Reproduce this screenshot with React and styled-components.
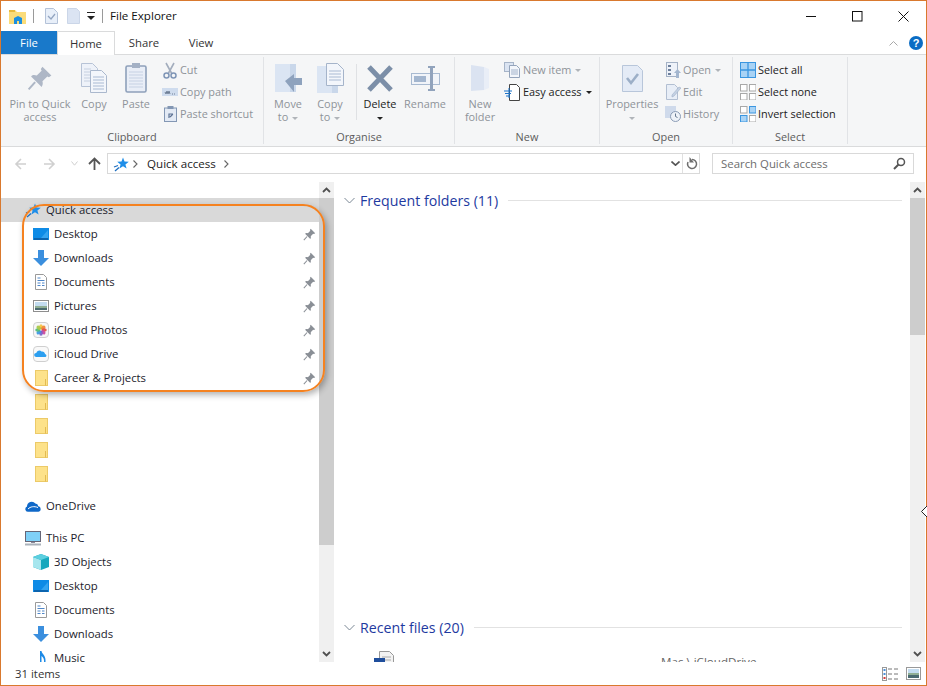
import React from "react";
import styled, { createGlobalStyle } from "styled-components";

const Global = createGlobalStyle`
  html, body { margin: 0; padding: 0; overflow: hidden; background: #fff; }
  * { box-sizing: border-box; }
`;

const Window = styled.div`
  position: relative; width: 927px; height: 686px; display: flex; flex-direction: column;
  background: #fff; border: 1px solid #d9792e;
  font-family: "Open Sans", "Noto Sans", sans-serif; font-size: 10.9px; color: #222;
`;
const TitleBar = styled.div`display: flex; align-items: center; height: 30px; padding-left: 8px; flex: none;`;
const QuickTool = styled.span`display: flex; width: ${p => p.$w}px; margin-right: ${p => p.$mr || 0}px; justify-content: center;`;
const TitleSep = styled.span`width: 1px; height: 14px; background: #9a9a9a; margin: 0 ${p => p.$mr}px 0 7px;`;
const TitleText = styled.span`font-size: 11.6px; color: #111; flex: 1; margin-bottom: 2px;`;
const WinButtons = styled.div`display: flex; height: 30px; align-items: center;`;
const WinButton = styled.span`width: 46px; display: flex; justify-content: center;`;

const TabRow = styled.div`display: flex; height: 24px; flex: none; border-bottom: 1px solid #dadbdc; align-items: stretch; font-size: 11.3px;`;
const FileTab = styled.div`width: 56px; background: #1979ca; color: #fff; display: flex; align-items: center; justify-content: center; height: 23px;`;
const Tab = styled.div`
  width: ${p => p.$w}px; height: ${p => (p.$active ? 24 : 23)}px; display: flex; align-items: center; justify-content: center; color: #333;
  background: #fff; ${p => p.$active && "border: 1px solid #dadbdc; border-bottom: none;"}
`;
const TabTools = styled.div`margin-left: auto; display: flex; align-items: center; gap: 11px; padding-right: 3px;`;
const Help = styled.span`width: 14px; height: 14px; border-radius: 50%; background: #0a6cc4; color: #fff; font: bold 11px "Liberation Sans", sans-serif; display: flex; align-items: center; justify-content: center;`;

const Ribbon = styled.div`display: flex; height: 92px; flex: none; background: #f5f6f7; border-bottom: 1px solid #dadbdc;`;
const Group = styled.div`
  width: ${p => p.$w}px; height: 87px; margin-top: 2px; padding-top: 2px; border-right: 1px solid #e1e3e6;
  display: flex; flex-direction: column;
`;
const GroupBody = styled.div`display: flex; flex: none; height: 70px; padding-left: ${p => p.$pad}px;`;
const GroupLabel = styled.div`flex: none; height: 15px; line-height: 16px; text-align: center; color: #5c5c5c;`;
const BigButton = styled.div`
  width: ${p => p.$w}px; display: flex; flex-direction: column; align-items: center; text-align: center;
  color: ${p => (p.$on ? "#222" : "#8e9399")}; line-height: 13px; white-space: nowrap;
`;
const BigIcon = styled.div`height: 38px; display: flex; align-items: center; justify-content: center;`;
const VSep = styled.div`width: 1px; height: 56px; margin: 5px 1px 0 5px; background: #dfe1e4;`;
const SmallCol = styled.div`display: flex; flex-direction: column; margin-left: ${p => p.$ml}px;`;
const SmallItem = styled.div`
  display: flex; align-items: center; height: 22px; gap: ${p => p.$gap}px; white-space: nowrap;
  color: ${p => (p.$on ? "#222" : "#8e9399")};
`;
const SmallIcon = styled.span`width: 18px; display: flex; justify-content: center; align-items: center;`;
const SmallText = styled.span`margin-bottom: 2px;`;
const Caret = styled.span`
  display: inline-block; width: 0; height: 0; vertical-align: middle; margin-left: ${p => (p.$ml === undefined ? 4 : p.$ml)}px;
  border-left: 3px solid transparent; border-right: 3px solid transparent;
  border-top: 3px solid ${p => (p.$on ? "#222" : "#b0b4b9")};
`;

const AddressRow = styled.div`display: flex; height: 35px; flex: none; padding: 6px 0 0 5px;`;
const NavBtn = styled.span`width: ${p => p.$w}px; height: 21px; display: flex; align-items: center; justify-content: center;`;
const AddressBox = styled.div`
  width: 593px; height: 21px; margin-left: 3px; border: 1px solid #d9d9d9; display: flex; align-items: center; padding: 0 1px 0 5px;
`;
const CrumbGap = styled.span`width: 4px;`;
const Crumb = styled.span`font-size: 11.6px; color: #222; margin: 0 8px 0 9px;`;
const Push = styled.span`flex: 1;`;
const BoxSep = styled.span`width: 1px; height: 19px; background: #e0e0e0; margin: 0 3px 0 2px;`;
const SearchBox = styled.div`
  width: 202px; height: 21px; margin-left: 12px; border: 1px solid #d9d9d9; display: flex; align-items: center;
  justify-content: space-between; padding: 0 7px 0 8px; color: #6d6d6d; font-size: 11.4px;
`;

const Body = styled.div`display: flex; flex: 1; min-height: 0; overflow: hidden;`;
const Sidebar = styled.div`width: 318px; flex: none; padding-top: 16px; overflow: hidden;`;
const TreeRow = styled.div`
  display: flex; align-items: center; height: 24px; padding-left: ${p => p.$level * 8 + 24}px; padding-right: 1px; margin-top: ${p => p.$mt || 0}px;
  background: ${p => (p.$sel ? "#d9d9d9" : "transparent")}; font-size: 11.35px; color: #1c1c2c;
`;
const TreeIcon = styled.span`width: 16px; height: 18px; display: flex; align-items: center; justify-content: center; margin-right: 5px; flex: none;`;
const TreeLabel = styled.span`margin-bottom: 2px;`;
const PinSlot = styled.span`margin-left: auto; display: flex; width: 13px; margin-right: 2px;`;

const Scrollbar = styled.div`width: 15px; flex: none; background: #f0f0f0; display: flex; flex-direction: column;`;
const ScrollArrow = styled.span`height: 16px; flex: none; display: flex; align-items: center; justify-content: center;`;
const Thumb = styled.div`height: ${p => p.$h}px; background: #cdcdcd; flex: none;`;
const Track = styled.div`flex: 1;`;
const RightGutter = styled.span`width: 1px; flex: none;`;

const Main = styled.div`flex: 1; min-width: 0; padding: 7px 8px 0 8px; margin-left: 2px; overflow: hidden;`;
const GroupHeader = styled.div`display: flex; align-items: center; height: 22px; gap: 5px;`;
const HeaderTitle = styled.span`font-size: 14.2px; color: #1e3a9f; white-space: nowrap;`;
const HeaderLine = styled.span`flex: 1; height: 1px; background: #e2e2e2; margin-left: 5px;`;
const GroupSpace = styled.div`height: ${p => p.$h}px;`;
const FileRow = styled.div`display: flex; margin-top: 13px; padding-left: 30px; height: 40px;`;
const FilePath = styled.span`margin: 0 0 0 266px; color: #666; font-size: 11.6px; line-height: 14px; padding-top: 4px;`;

const StatusBar = styled.div`display: flex; align-items: center; height: 23px; flex: none; padding: 0 5px 0 14px; color: #333;`;
const StatusText = styled.span`flex: 1; font-size: 11.4px;`;
const StatusViews = styled.div`display: flex; gap: 8px; align-items: center;`;

const Annotation = styled.div`
  position: absolute; left: 21px; top: 203px; width: 303px; height: 188px; border: 2px solid #f58220; border-radius: 22px;
  box-shadow: 2px 3px 6px rgba(0,0,0,.3); pointer-events: none;
`;
const EdgeMark = styled.span`position: absolute; right: -1px; top: 505px; display: flex;`;

const S = ({ w, h, children }) => <svg width={w} height={h} viewBox={`0 0 ${w} ${h}`} style={{ display: "block", flex: "none" }}>{children}</svg>;

const TitleFolder = () => <S w={17} h={15}><path d="M0 1h6l2 2h9v12H0z" fill="#fbdc79" /><path d="M0 1h6v2H0z" fill="#e8b93c" /><path d="M5 15v-6l4-2 4 2v6h-3v-3H8v3z" fill="#1b8fe0" /></S>;
const CheckDoc = () => <S w={13} h={16}><path d="M.5.5h8l4 4v11H.5z" fill="#e8eff9" stroke="#b4c2d8" /><path d="M3 8l3 3 4-5" fill="none" stroke="#93a5c1" strokeWidth="1.3" /></S>;
const BlankDoc = () => <S w={13} h={16}><path d="M.5.5h9l3 3v12H.5z" fill="#dbe4f3" stroke="#cbd6e8" /></S>;
const QuickDrop = () => <S w={8} h={9}><path d="M0 0h8v1H0zM0 4h8L4 8z" fill="#222" /></S>;
const Min = () => <S w={11} h={11}><path d="M0 5.5h10" stroke="#111" /></S>;
const Max = () => <S w={11} h={11}><rect x=".5" y=".5" width="9.5" height="9.5" fill="none" stroke="#111" /></S>;
const Close = () => <S w={11} h={11}><path d="M.5.5l10 10M10.5.5l-10 10" stroke="#111" /></S>;
const ChevUp = () => <S w={9} h={6}><path d="M.5 5.5l4-4 4 4" fill="none" stroke="#a8a8a8" /></S>;

const Pin = ({ s = 32, c = "#aeb7c6" }) => <svg width={s} height={s} viewBox="0 0 32 32" style={{ display: "block" }}><path d="M19 2l11 11-3 2-2-1-6 6c1 3 0 5-1 7L5 14c2-2 4-2 7-1l6-6-1-2z" fill={c} /><path d="M10 21L2 30" stroke={c} strokeWidth="2.5" /></svg>;
const CopyBig = () => <S w={26} h={30}><path d="M.5.5h11l5 5v18H.5z" fill="#eef2f9" stroke="#b7c3d6" /><path d="M3 6h7M3 9h10M3 12h10M3 15h10M3 18h10" stroke="#c6d0e0" /><path d="M9.5 7.5h11l5 5v17h-16z" fill="#f3f6fb" stroke="#aab8cd" /><path d="M12 14h11M12 17h11M12 20h11M12 23h11M12 26h11" stroke="#a9bad3" /></S>;
const PasteBig = () => <S w={22} h={30}><rect x="1" y="3" width="20" height="26" rx="1.5" fill="#e9eef7" stroke="#8ea0ba" strokeWidth="1.6" /><rect x="7" y="0" width="8" height="5" fill="#a4b1c5" /><path d="M4 9h14M4 12h14M4 15h14M4 18h14M4 21h14M4 24h14" stroke="#c6d1e3" /></S>;
const Scissors = () => <S w={14} h={17}><path d="M3 1l6 11M11 1L5 12" stroke="#a3adbd" strokeWidth="1.6" /><circle cx="3.5" cy="13.5" r="2.5" fill="none" stroke="#7f95b6" strokeWidth="1.5" /><circle cx="10.5" cy="13.5" r="2.5" fill="none" stroke="#7f95b6" strokeWidth="1.5" /></S>;
const CopyPath = () => <S w={16} h={8}><rect width="16" height="8" fill="#cfdcee" /><path d="M3 4l1 2 1-3 1 3 1-3 1 3M10 6h1M12 6h1" stroke="#6f7f96" fill="none" /></S>;
const PasteShort = () => <S w={13} h={16}><rect x=".5" y="2" width="12" height="13.5" fill="#e3eaf5" stroke="#8397b4" /><rect x="3.5" y="0" width="6" height="3" fill="#8397b4" /><path d="M5 12V8h4M9 8l-3 3" stroke="#5d7395" fill="none" strokeWidth="1.2" /></S>;
const MoveBig = () => <S w={27} h={29}><rect x="0" y="0" width="21" height="28" fill="#dbe5f3" /><rect x="15" y="0" width="6" height="28" fill="#c9d7ea" /><path d="M10 17l9-7v4h8v7h-8v7z" fill="#8ea2bd" /></S>;
const CopyToBig = () => <S w={27} h={30}><rect x="0" y="3" width="21" height="27" fill="#dbe5f3" /><rect x="15" y="3" width="6" height="27" fill="#c9d7ea" /><path d="M9.5.5h11l6 6v16h-17z" fill="#f3f6fb" stroke="#a5b4ca" /><path d="M12 8h12M12 11h12M12 14h12M12 17h12" stroke="#a9bad3" /></S>;
const DeleteBig = () => <S w={26} h={27}><path d="M2 2l22 23M24 2L2 25" stroke="#7c8fa8" strokeWidth="5" /></S>;
const RenameBig = () => <S w={29} h={27}><rect x=".5" y="8.5" width="28" height="11" fill="#f1f4f9" stroke="#a8bad1" /><rect x="3" y="11" width="12" height="6" fill="#a3b6cf" /><path d="M17 1h7v2h-2v21h2v2h-7v-2h2V3h-2z" fill="#91a3bc" /></S>;
const NewFolderBig = () => <S w={20} h={28}><path d="M1 1l13 2v23L1 27z" fill="#dbe3f1" /><path d="M14 3l5 2v19l-5 2z" fill="#e9eef7" /></S>;
const NewItem = () => <S w={17} h={16}><rect x=".5" y=".5" width="9" height="9" fill="#dbe4f2" stroke="#a6b4c8" /><path d="M5.5 3.5h7l3 3v9h-10z" fill="#f3f6fb" stroke="#94a4bb" /><path d="M7 8h7M7 10h7M7 12h7" stroke="#a2b3cb" /></S>;
const EasyAccess = () => <S w={16} h={17}><path d="M5.5.5h7l3 3v13h-10z" fill="#fff" stroke="#444" /><path d="M0 7h8M1 9.5h6M2 12h4M5 4v10" stroke="#1b72c8" fill="none" /></S>;
const PropsBig = () => <S w={21} h={27}><path d="M.5.5h15l5 5v21H.5z" fill="#e4ebf6" stroke="#b8c6da" /><path d="M5 13l4 5 7-9" fill="none" stroke="#9cafc7" strokeWidth="2.6" /></S>;
const OpenSmall = () => <S w={15} h={16}><rect x=".5" y=".5" width="11" height="14" fill="#eef2f9" stroke="#a4b2c6" /><path d="M2 3h3v2H2zM2 7h3v2H2zM2 11h3v2H2z" fill="#6c7f9b" /><path d="M10 16V11H8l3.5-4 3.5 4h-2v5z" fill="#a3b6cf" /></S>;
const EditSmall = () => <S w={15} h={16}><path d="M.5.5h8l3 3v12H.5z" fill="#e8eef7" stroke="#b2bfd2" /><path d="M6 11l7-8 2 1-7 8-2 1z" fill="#c5d2e4" stroke="#9fb0c7" strokeWidth=".6" /></S>;
const HistorySmall = () => <S w={16} h={16}><rect x="0" y="0" width="11" height="12" fill="#cfdaeb" /><circle cx="10.5" cy="10.5" r="5" fill="#eef2f8" stroke="#8b9cb5" /><path d="M10.5 7.5v3l2 1" stroke="#66788f" fill="none" /></S>;
const Grid4 = ({ fills, strokes }) => (
  <S w={16} h={16}>{[[0, 0], [9, 0], [0, 9], [9, 9]].map(([x, y], i) => <rect key={i} x={x + .5} y={y + .5} width="6.5" height="6.5" fill={fills[i]} stroke={strokes[i]} />)}</S>
);
const SelectAll = () => <S w={16} h={16}><rect x=".5" y=".5" width="15" height="15" fill="#a9d3f5" stroke="#3b96e0" /><path d="M8 0v16M0 8h16" stroke="#3b96e0" strokeWidth="1.3" /></S>;

const DesktopI = () => <S w={16} h={12}><rect width="16" height="12" fill="#0e8be6" /><path d="M8 10l7-8v8z" fill="#35a4f0" /><rect x="1" y="10.5" width="14" height="1" fill="#0b3f77" /></S>;
const DownI = () => <S w={16} h={16}><path d="M5 0h6v8h5l-8 8-8-8h5z" fill="#3b8fde" /></S>;
const DocI = () => <S w={12} h={16}><path d="M.5.5h8l3 3v12H.5z" fill="#fff" stroke="#9a9a9a" /><path d="M2.5 4h3M2.5 6.5h7M2.5 9h3M7 9h2.5M2.5 11.5h3M7 11.5h2.5" stroke="#4f86c8" /></S>;
const PicI = () => <S w={16} h={12}><rect x=".5" y=".5" width="15" height="11" fill="#fff" stroke="#8e8e8e" /><rect x="2" y="2" width="12" height="4" fill="#c3dcf0" /><rect x="2" y="6" width="12" height="2" fill="#8fae94" /><rect x="2" y="8" width="12" height="2" fill="#4a6a70" /></S>;
const PhotosI = () => {
  const cols = ["#f6c344", "#ee8a35", "#e4504a", "#c74aa2", "#7a62c9", "#3f9be0", "#55bb7b", "#a9c94a"];
  return <S w={16} h={16}><rect x=".5" y=".5" width="15" height="15" rx="3.5" fill="#f7f7f7" stroke="#cfcfcf" />{cols.map((c, i) => <ellipse key={i} cx="8" cy="4.8" rx="1.8" ry="2.6" fill={c} opacity=".95" transform={`rotate(${i * 45} 8 8)`} />)}</S>;
};
const DriveI = () => <S w={16} h={16}><rect x=".5" y=".5" width="15" height="15" rx="3.5" fill="#f9f9f9" stroke="#cfcfcf" /><path d="M3 11a2 2 0 0 1 .3-4 3 3 0 0 1 5.2-1.4A2.6 2.6 0 0 1 12 8a1.600 1.600 0 0 1 .6 3z" fill="#2c9ff0" /></S>;
const FolderI = () => <S w={13} h={16}><rect x=".5" y=".5" width="12" height="15" fill="#fde28a" stroke="#ecca68" /><path d="M10.5 9v6.500" stroke="#e3bb52" /></S>;
const OneDriveI = () => <S w={16} h={11}><path d="M2.8 10.8A2.700 2.700 0 0 1 2 5.600 4.700 4.700 0 0 1 10.400 2.600 3.200 3.200 0 0 1 13.300 5.300 2.800 2.800 0 0 1 13.500 10.800z" fill="#0f68c8" /><path d="M3 8c2.500-2.500 6-3 10-1.500" fill="none" stroke="#fff" /></S>;
const StarI = () => <S w={16} h={16}><path d="M10 1.500l1.500 4 4.300.2-3.400 2.700 1.200 4.200L10 10.200l-3.600 2.400 1.200-4.200L4.200 5.700l4.300-.2z" fill="#1f8ee8" /><path d="M5 9.500L1 11M6 11.500L2 15" stroke="#1f6fc0" strokeWidth="1.300" /></S>;
const PcI = () => <S w={16} h={15}><rect x=".5" y=".5" width="15" height="10" fill="#7fd0f7" stroke="#667" /><path d="M0 13.500h16" stroke="#aab2bb" strokeWidth="2" /><path d="M6 11.500h4" stroke="#889" /></S>;
const CubeI = () => <S w={16} h={16}><path d="M8 0l8 3v10l-8 3-8-3V3z" fill="#18a8bd" /><path d="M0 3l8 3v10l-8-3z" fill="#a6e6ee" /><path d="M8 0l8 3-8 3-8-3z" fill="#5ccfdf" /></S>;
const NoteI = () => <S w={12} h={16}><path d="M5 1h1.500c.3 3 4 4 4 9v5H9v-4.500C9 8 7.500 7 6.500 6v9H2v-3h3z" fill="#1d8ae6" /></S>;
const PinSmall = () => <Pin s={13} c="#8a8f96" />;

const ArrowL = ({ c = "#d0d0d0" }) => <S w={13} h={12}><path d="M7 1L2 6l5 5M2 6h10" fill="none" stroke={c} strokeWidth="1.6" /></S>;
const ArrowR = ({ c = "#d0d0d0" }) => <S w={13} h={12}><path d="M6 1l5 5-5 5M11 6H1" fill="none" stroke={c} strokeWidth="1.6" /></S>;
const ArrowU = () => <S w={13} h={13}><path d="M1 7l5.500-5.500L12 7M6.500 2v11" fill="none" stroke="#555" strokeWidth="1.8" /></S>;
const ChevD = ({ c = "#555", w = 7, sw = 1 }) => <S w={w} h={5}><path d={`M.5 .5L${w / 2} 4.200L${w - .5} .5`} fill="none" stroke={c} strokeWidth={sw} /></S>;
const ChevR = () => <S w={5} h={8}><path d="M.5.5L4 4 .5 7.500" fill="none" stroke="#666" strokeWidth="1.1" /></S>;
const Refresh = () => <S w={12} h={13}><path d="M6 2.500a4.500 4.500 0 1 1-4 2.500" fill="none" stroke="#6d6d6d" strokeWidth="1.5" /><path d="M3.500 0v5.500H8z" fill="#6d6d6d" /></S>;
const Lens = () => <S w={13} h={13}><circle cx="8" cy="5" r="3.500" fill="none" stroke="#555" strokeWidth="1.5" /><path d="M5.500 7.500L1 12" stroke="#555" strokeWidth="2" /></S>;
const ScrollUp = () => <S w={9} h={6}><path d="M1 5l3.500-3.500L8 5" fill="none" stroke="#505050" strokeWidth="1.8" /></S>;
const ScrollDown = () => <S w={9} h={6}><path d="M1 1l3.500 3.500L8 1" fill="none" stroke="#505050" strokeWidth="1.8" /></S>;
const HeaderChev = () => <S w={11} h={7}><path d="M.5 1l5 5 5-5" fill="none" stroke="#7a8794" /></S>;
const FileDoc = () => <S w={21} h={22}><path d="M5.500.5h10l4 4v17h-14z" fill="#f3f3f3" stroke="#999" /><path d="M8 6h9M8 9h9M11 12h6M11 15h6" stroke="#aaa" /><rect x="0" y="7" width="11" height="12" fill="#1f4e9c" /></S>;
const DetailsV = () => <S w={16} h={14}><rect x=".5" y=".5" width="4" height="13" fill="#fff" stroke="#999" /><rect x="1.500" y="2" width="2" height="2" fill="#4a90d9" /><rect x="1.500" y="6" width="2" height="2" fill="#4a90d9" /><rect x="1.500" y="10" width="2" height="2" fill="#d93b3b" /><path d="M6 2h4M12 2h4M6 7h4M12 7h4M6 12h4M12 12h4" stroke="#777" /></S>;
const ThumbV = () => <S w={15} h={13}><rect x=".5" y=".5" width="14" height="12" fill="#fff" stroke="#999" /><rect x="2" y="2" width="11" height="4" fill="#c3dcf0" /><rect x="2" y="6" width="11" height="2" fill="#8fae94" /><rect x="2" y="8" width="11" height="3" fill="#4a6a70" /></S>;

const quickRows = [
  ["Desktop", <DesktopI />], ["Downloads", <DownI />], ["Documents", <DocI />], ["Pictures", <PicI />],
  ["iCloud Photos", <PhotosI />], ["iCloud Drive", <DriveI />], ["Career & Projects", <FolderI />],
];
const pcRows = [["3D Objects", <CubeI />], ["Desktop", <DesktopI />], ["Documents", <DocI />], ["Downloads", <DownI />], ["Music", <NoteI />]];

const Big = ({ w, icon, on, lines }) => (
  <BigButton $w={w} $on={on}>
    <BigIcon>{icon}</BigIcon>
    {lines.map((l, i) => <div key={i}>{l}</div>)}
  </BigButton>
);
const Small = ({ icon, text, on, caret, gap = 1 }) => (
  <SmallItem $on={on} $gap={gap}><SmallIcon>{icon}</SmallIcon><SmallText>{text}{caret && <Caret $on={on} />}</SmallText></SmallItem>
);

export default function App() {
  return (
    <Window>
      <Global />
      <TitleBar>
        <QuickTool $w={17}><TitleFolder /></QuickTool>
        <TitleSep $mr={11} />
        <QuickTool $w={13} $mr={9}><CheckDoc /></QuickTool>
        <QuickTool $w={13} $mr={7}><BlankDoc /></QuickTool>
        <QuickTool $w={8}><QuickDrop /></QuickTool>
        <TitleSep $mr={7} />
        <TitleText>File Explorer</TitleText>
        <WinButtons>
          <WinButton><Min /></WinButton>
          <WinButton><Max /></WinButton>
          <WinButton><Close /></WinButton>
        </WinButtons>
      </TitleBar>
      <TabRow>
        <FileTab>File</FileTab>
        <Tab $active $w={58}>Home</Tab>
        <Tab $w={58}>Share</Tab>
        <Tab $w={56}>View</Tab>
        <TabTools><ChevUp /><Help>?</Help></TabTools>
      </TabRow>
      <Ribbon>
        <Group $w={263}>
          <GroupBody $pad={6}>
            <Big w={66} icon={<Pin s={26} />} lines={["Pin to Quick", "access"]} />
            <Big w={42} icon={<CopyBig />} lines={["Copy"]} />
            <Big w={42} icon={<PasteBig />} lines={["Paste"]} />
            <SmallCol $ml={4}>
              <Small icon={<Scissors />} text="Cut" />
              <Small icon={<CopyPath />} text="Copy path" />
              <Small icon={<PasteShort />} text="Paste shortcut" />
            </SmallCol>
          </GroupBody>
          <GroupLabel>Clipboard</GroupLabel>
        </Group>
        <Group $w={191}>
          <GroupBody $pad={3}>
            <Big w={42} icon={<MoveBig />} lines={["Move", <>to<Caret /></>]} />
            <Big w={42} icon={<CopyToBig />} lines={["Copy", <>to<Caret /></>]} />
            <VSep />
            <Big w={44} on icon={<DeleteBig />} lines={["Delete", <Caret $on $ml={0} />]} />
            <Big w={46} icon={<RenameBig />} lines={["Rename"]} />
          </GroupBody>
          <GroupLabel>Organise</GroupLabel>
        </Group>
        <Group $w={145}>
          <GroupBody $pad={4}>
            <Big w={42} icon={<NewFolderBig />} lines={["New", "folder"]} />
            <SmallCol $ml={2}>
              <Small gap={2} icon={<NewItem />} text="New item" caret />
              <Small gap={2} on icon={<EasyAccess />} text="Easy access" caret />
            </SmallCol>
          </GroupBody>
          <GroupLabel>New</GroupLabel>
        </Group>
        <Group $w={133}>
          <GroupBody $pad={5}>
            <Big w={54} icon={<PropsBig />} lines={["Properties", <Caret $ml={0} />]} />
            <SmallCol $ml={5}>
              <Small icon={<OpenSmall />} text="Open" caret />
              <Small icon={<EditSmall />} text="Edit" />
              <Small icon={<HistorySmall />} text="History" />
            </SmallCol>
          </GroupBody>
          <GroupLabel>Open</GroupLabel>
        </Group>
        <Group $w={115}>
          <GroupBody $pad={5}>
            <SmallCol $ml={1}>
              <Small gap={1} on icon={<SelectAll />} text="Select all" />
              <Small gap={1} on icon={<Grid4 fills={["#fff", "#fff", "#fff", "#fff"]} strokes={["#a8a8a8", "#a8a8a8", "#a8a8a8", "#a8a8a8"]} />} text="Select none" />
              <Small gap={1} on icon={<Grid4 fills={["#fff", "#a9d3f5", "#a9d3f5", "#fff"]} strokes={["#a8a8a8", "#3b96e0", "#3b96e0", "#a8a8a8"]} />} text="Invert selection" />
            </SmallCol>
          </GroupBody>
          <GroupLabel>Select</GroupLabel>
        </Group>
      </Ribbon>
      <AddressRow>
        <NavBtn $w={29}><ArrowL /></NavBtn>
        <NavBtn $w={29}><ArrowR /></NavBtn>
        <NavBtn $w={20}><ChevD c="#cfcfcf" /></NavBtn>
        <NavBtn $w={20}><ArrowU /></NavBtn>
        <AddressBox>
          <StarI />
          <CrumbGap />
          <ChevR />
          <Crumb>Quick access</Crumb>
          <ChevR />
          <Push />
          <ChevD c="#555" w={9} sw={1.6} />
          <BoxSep />
          <Refresh />
        </AddressBox>
        <SearchBox>Search Quick access<Lens /></SearchBox>
      </AddressRow>
      <Body>
        <Sidebar>
          <TreeRow $level={0} $sel><TreeIcon><StarI /></TreeIcon><TreeLabel>Quick access</TreeLabel></TreeRow>
          {quickRows.map(([t, i]) => (
            <TreeRow key={t} $level={1}><TreeIcon>{i}</TreeIcon><TreeLabel>{t}</TreeLabel><PinSlot><PinSmall /></PinSlot></TreeRow>
          ))}
          {[0, 1, 2, 3].map(k => <TreeRow key={k} $level={1}><TreeIcon><FolderI /></TreeIcon></TreeRow>)}
          <TreeRow $level={0} $mt={8}><TreeIcon><OneDriveI /></TreeIcon><TreeLabel>OneDrive</TreeLabel></TreeRow>
          <TreeRow $level={0} $mt={8}><TreeIcon><PcI /></TreeIcon><TreeLabel>This PC</TreeLabel></TreeRow>
          {pcRows.map(([t, i]) => <TreeRow key={t} $level={1}><TreeIcon>{i}</TreeIcon><TreeLabel>{t}</TreeLabel></TreeRow>)}
        </Sidebar>
        <Scrollbar>
          <ScrollArrow><ScrollUp /></ScrollArrow>
          <Thumb $h={347} />
          <Track />
          <ScrollArrow><ScrollDown /></ScrollArrow>
        </Scrollbar>
        <Main>
          <GroupHeader><HeaderChev /><HeaderTitle>Frequent folders (11)</HeaderTitle><HeaderLine /></GroupHeader>
          <GroupSpace $h={405} />
          <GroupHeader><HeaderChev /><HeaderTitle>Recent files (20)</HeaderTitle><HeaderLine /></GroupHeader>
          <FileRow><FileDoc /><FilePath>Mac \ iCloudDrive</FilePath></FileRow>
        </Main>
        <Scrollbar>
          <ScrollArrow><ScrollUp /></ScrollArrow>
          <Thumb $h={137} />
          <Track />
          <ScrollArrow><ScrollDown /></ScrollArrow>
        </Scrollbar>
        <RightGutter />
      </Body>
      <StatusBar>
        <StatusText>31 items</StatusText>
        <StatusViews><DetailsV /><ThumbV /></StatusViews>
      </StatusBar>
      <Annotation />
      <EdgeMark><S w={6} h={12}><path d="M6 0L.5 5.500 6 11" fill="#fff" stroke="#222" /></S></EdgeMark>
    </Window>
  );
}
